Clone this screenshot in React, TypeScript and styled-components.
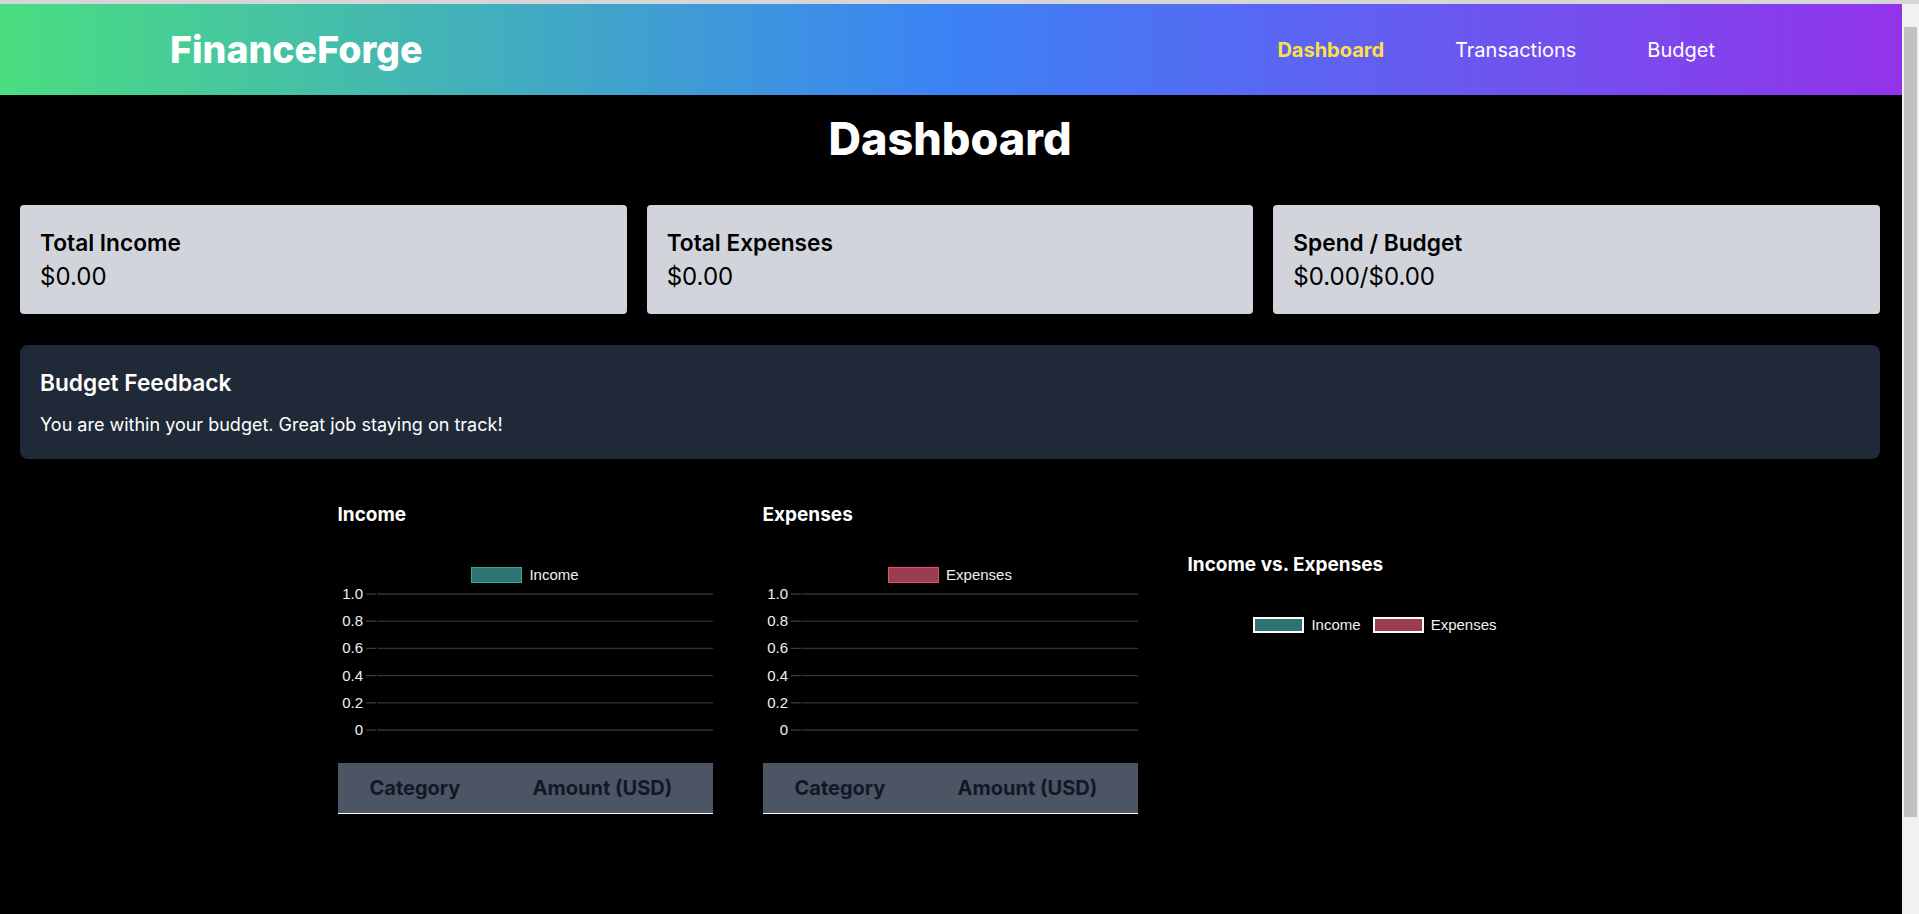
import React, { FC } from 'react';
import styled, { createGlobalStyle } from 'styled-components';

// the reference was taken with a classic scrollbar: keep the page that much narrower
const GlobalStyle = createGlobalStyle`
  html {
    margin: 0;
    border-top: 4px solid #d6d6d9;
    background-color: #f1f1f1;
    background-image: linear-gradient(#c1c1c1, #c1c1c1);
    background-repeat: no-repeat;
    background-position: right 2px top 23px;
    background-size: 13px 790px;
  }

  body {
    margin: 0 17px 0 0;
    background: #000;
    font-family: Inter, "Noto Sans", sans-serif;
  }
`;

const Header = styled.header`
  height: 91px;
  display: flex;
  align-items: center;
  justify-content: space-between;
  padding: 0 187px 0 170px;
  background-image: linear-gradient(to right, #4ade80, #3b82f6, #9333ea);
`;

const Logo = styled.div`
  font-size: 37.5px;
  font-weight: 800;
  color: #fff;
`;

const Nav = styled.nav`
  display: flex;
  gap: 71px;
`;

const NavLink = styled.a<{ $active?: boolean }>`
  font-size: 20px;
  line-height: 28px;
  font-weight: ${(p) => (p.$active ? 700 : 400)};
  color: ${(p) => (p.$active ? '#fde047' : '#fff')};
  text-decoration: none;
  cursor: pointer;
`;

const Main = styled.main`
  padding: 20px 22px 196px 20px;
`;

const Title = styled.h1`
  margin: 0 0 42px;
  font-size: 45px;
  line-height: 48px;
  font-weight: 800;
  color: #fff;
  text-align: center;
`;

const Cards = styled.div`
  display: grid;
  grid-template-columns: repeat(3, 1fr);
  gap: 20px;
  margin-bottom: 31px;
`;

const Card = styled.div`
  background: #d1d5db;
  border-radius: 4px;
  padding: 24px 20px 21px;
`;

const CardTitle = styled.div`
  font-size: 22.7px;
  line-height: 28px;
  font-weight: 600;
  color: #000;
  margin-bottom: 4px;
`;

const CardValue = styled.div`
  font-size: 24px;
  line-height: 32px;
  color: #000;
`;

const Feedback = styled.section`
  background: #1f2937;
  border-radius: 8px;
  padding: 24px 20px 20px;
  margin-bottom: 42px;
`;

const FeedbackTitle = styled.h3`
  margin: 0 0 14px;
  font-size: 22.7px;
  line-height: 28px;
  font-weight: 600;
  color: #fff;
`;

const FeedbackText = styled.p`
  margin: 0;
  font-size: 18px;
  line-height: 28px;
  color: #fff;
`;

const ChartRow = styled.div`
  display: flex;
  justify-content: center;
  align-items: center;
  gap: 50px;
`;

const ChartCol = styled.div`
  width: 375px;
`;

const ChartHeading = styled.h4`
  margin: 0 0 24px;
  font-size: 19px;
  line-height: 28px;
  font-weight: 700;
  color: #fff;
`;

const ChartBox = styled.div`
  padding-top: 14px;
`;

const Legend = styled.div`
  display: flex;
  justify-content: center;
  gap: 12px;
  height: 16px;
`;

const LegendItem = styled.div`
  display: flex;
  align-items: center;
  gap: 7px;
  font-family: "Liberation Sans", Arial, sans-serif;
  font-size: 15px;
  line-height: 16px;
  color: #f0f0f0;
`;

const Swatch = styled.span<{ $fill: string; $border: string; $width?: number }>`
  display: block;
  box-sizing: border-box;
  width: 51px;
  height: 16px;
  background: ${(p) => p.$fill};
  border: ${(p) => p.$width || 1}px solid ${(p) => p.$border};
`;

const GridSvg = styled.svg`
  display: block;
  margin-bottom: 20px;
`;

const PieArea = styled.div`
  height: 131px;
`;

const Table = styled.table`
  width: 100%;
  border-collapse: collapse;

  th {
    background: #4b5563;
    padding: 11px 32px;
    font-size: 20px;
    line-height: 28px;
    font-weight: 700;
    color: #111827;
    text-align: center;
    white-space: nowrap;
    border-bottom: 1px solid #fff;
  }

  th:first-child {
    width: 1px;
  }
`;

const TEAL = { fill: '#2d7471', border: '#3aa9a5' };
const ROSE = { fill: '#9b3d50', border: '#e05272' };

const ticks = ['1.0', '0.8', '0.6', '0.4', '0.2', '0'];

const BarChart: FC<{ label: string; fill: string; border: string }> = ({ label, fill, border }) => (
  <ChartBox>
    <Legend>
      <LegendItem>
        <Swatch $fill={fill} $border={border} />
        {label}
      </LegendItem>
    </Legend>
    <GridSvg width={375} height={160} viewBox="0 0 375 160">
      {ticks.map((t, i) => {
        const y = 11 + i * 27.2;
        return (
          <g key={t}>
            <line x1={28} x2={38} y1={y} y2={y} stroke="#3a3a3a" strokeWidth={1.3} />
            <line x1={39} x2={375} y1={y} y2={y} stroke="#333" strokeWidth={1.3} />
            <text
              x={25}
              y={y + 5}
              textAnchor="end"
              fontFamily="'Liberation Sans', Arial, sans-serif"
              fontSize={15}
              fill="#f0f0f0"
            >
              {t}
            </text>
          </g>
        );
      })}
    </GridSvg>
  </ChartBox>
);

const DataTable: FC = () => (
  <Table>
    <thead>
      <tr>
        <th>Category</th>
        <th>Amount (USD)</th>
      </tr>
    </thead>
  </Table>
);

const App: FC = () => {
  return (
    <>
      <GlobalStyle />
      <Header>
        <Logo>FinanceForge</Logo>
        <Nav>
          <NavLink $active>Dashboard</NavLink>
          <NavLink>Transactions</NavLink>
          <NavLink>Budget</NavLink>
        </Nav>
      </Header>
      <Main>
        <Title>Dashboard</Title>
        <Cards>
          <Card>
            <CardTitle>Total Income</CardTitle>
            <CardValue>$0.00</CardValue>
          </Card>
          <Card>
            <CardTitle>Total Expenses</CardTitle>
            <CardValue>$0.00</CardValue>
          </Card>
          <Card>
            <CardTitle>Spend / Budget</CardTitle>
            <CardValue>$0.00/$0.00</CardValue>
          </Card>
        </Cards>
        <Feedback>
          <FeedbackTitle>Budget Feedback</FeedbackTitle>
          <FeedbackText>You are within your budget. Great job staying on track!</FeedbackText>
        </Feedback>
        <ChartRow>
          <ChartCol>
            <ChartHeading>Income</ChartHeading>
            <BarChart label="Income" fill={TEAL.fill} border={TEAL.border} />
            <DataTable />
          </ChartCol>
          <ChartCol>
            <ChartHeading>Expenses</ChartHeading>
            <BarChart label="Expenses" fill={ROSE.fill} border={ROSE.border} />
            <DataTable />
          </ChartCol>
          <ChartCol>
            <ChartHeading>Income vs. Expenses</ChartHeading>
            <ChartBox>
              <Legend>
                <LegendItem>
                  <Swatch $fill={TEAL.fill} $border="#fff" $width={2} />
                  Income
                </LegendItem>
                <LegendItem>
                  <Swatch $fill="#9a3b4f" $border="#fff" $width={2} />
                  Expenses
                </LegendItem>
              </Legend>
              <PieArea />
            </ChartBox>
          </ChartCol>
        </ChartRow>
      </Main>
    </>
  );
};

export default App;
